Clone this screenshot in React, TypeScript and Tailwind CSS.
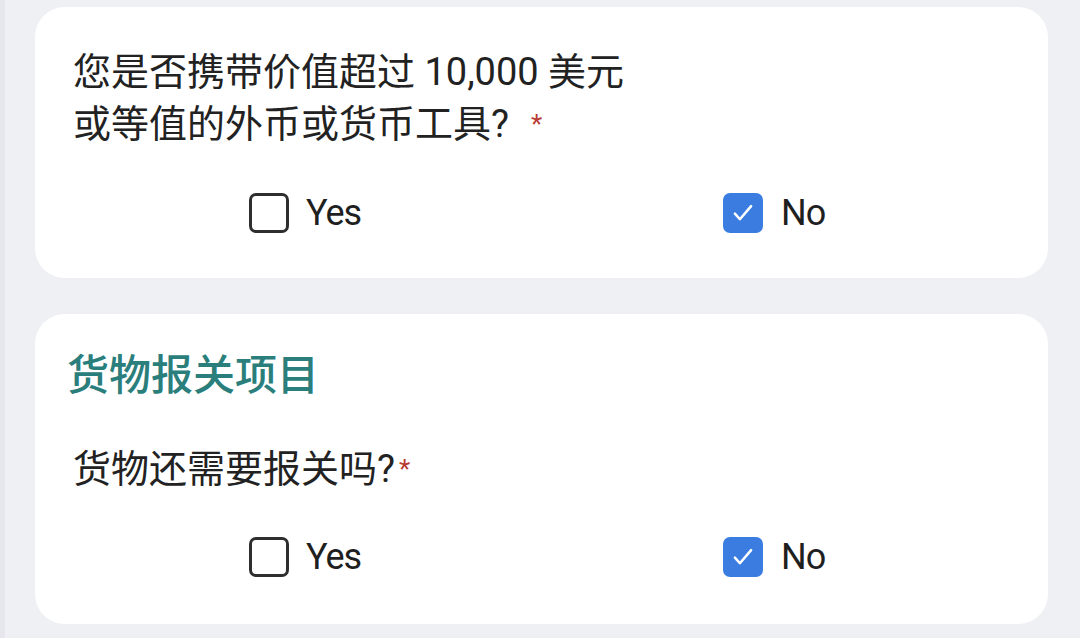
import React from "react";

const font = { fontFamily: "Roboto, 'Noto Sans CJK SC', 'Noto Sans', sans-serif" };

function Box({ checked }: { checked: boolean }) {
  if (checked) {
    return (
      <div className="w-[40px] h-[40px] rounded-[7px] bg-[#3a7ce0] flex items-center justify-center">
        <svg width="30" height="30" viewBox="0 0 24 24" fill="none">
          <path d="M5.5 12.5l4 4.5L18.5 6.5" stroke="#fff" strokeWidth="2" strokeLinecap="round" strokeLinejoin="round" />
        </svg>
      </div>
    );
  }
  return <div className="w-[40px] h-[40px] rounded-[7px] border-[3px] border-[#2e2e2e] bg-white" />;
}

function Options() {
  return (
    <div className="grid grid-cols-[474px_auto] ml-[176px] h-[40px]">
      <div className="flex items-center gap-[17px]">
        <Box checked={false} />
        <span className="text-[36px] leading-[40px] text-[#1f1f1f] tracking-[-1px]">Yes</span>
      </div>
      <div className="flex items-center gap-[18px]">
        <Box checked={true} />
        <span className="text-[36px] leading-[40px] text-[#1f1f1f] tracking-[-1px]">No</span>
      </div>
    </div>
  );
}

export default function App() {
  return (
    <div className="w-[1080px] h-[638px] bg-[#eff0f4] overflow-hidden flex" style={font}>
      <div className="w-[5px] h-full bg-[#e6e6ec]" />
      <div className="flex flex-col gap-[36px] pt-[7px] pl-[30px]">
        <div className="w-[1013px] rounded-[30px] bg-white pt-[39px] pb-[45px] px-[38px]">
          <div className="text-[38px] leading-[52px] text-[#222]">
            <div>您是否携带价值超过 10,000 美元</div>
            <div>
              或等值的外币或货币工具?
              <span className="text-[#b83a32] text-[26px] align-top ml-[22px]">*</span>
            </div>
          </div>
          <div className="mt-[43px]">
            <Options />
          </div>
        </div>
        <div className="w-[1013px] rounded-[30px] bg-white pt-[34px] pb-[47px] pl-[32px] pr-[38px]">
          <div className="text-[42px] leading-[56px] font-medium text-[#2a7e7b]">货物报关项目</div>
          <div className="mt-[39px] pl-[6px] text-[38px] leading-[52px] text-[#222]">
            货物还需要报关吗?
            <span className="text-[#b83a32] text-[26px] align-top ml-[4px]">*</span>
          </div>
          <div className="mt-[42px] pl-[6px]">
            <Options />
          </div>
        </div>
      </div>
    </div>
  );
}
